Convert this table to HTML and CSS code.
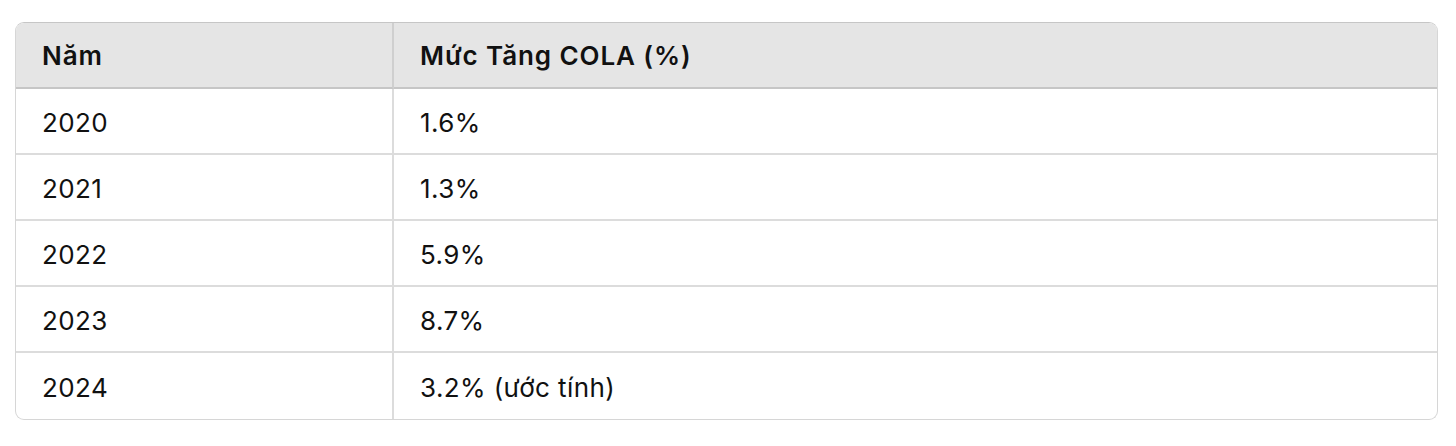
FILE: index.html
```html
<!DOCTYPE html>
<html>
<head>
<meta charset="utf-8">
<link rel="stylesheet" href="styles.css">
</head>
<body>
<div class="wrap">
<table class="tbl">
<thead>
<tr><th class="c1">Năm</th><th>Mức Tăng COLA (%)</th></tr>
</thead>
<tbody>
<tr><td class="c1">2020</td><td>1.6%</td></tr>
<tr><td class="c1">2021</td><td>1.3%</td></tr>
<tr><td class="c1">2022</td><td>5.9%</td></tr>
<tr><td class="c1">2023</td><td>8.7%</td></tr>
<tr><td class="c1">2024</td><td>3.2% (ước tính)</td></tr>
</tbody>
</table>
</div>
</body>
</html>
```
FILE: styles.css
```css
html, body { margin: 0; padding: 0; background: #fff; }
body {
  font-family: Inter, "Noto Sans", sans-serif;
  color: #111;
}
.wrap { padding: 22px 18px 0 15px; }
.tbl {
  width: 100%;
  border-collapse: separate;
  border-spacing: 0;
  border: 1px solid #d6d6d6;
  border-top-color: #c6c6c6;
  border-radius: 9px;
  overflow: hidden;
  font-size: 26px;
  letter-spacing: 0.4px;
}
.tbl thead tr { background: #e5e5e5; }
.tbl th {
  text-align: left;
  font-weight: 600;
  letter-spacing: 0.9px;
  height: 66px;
  padding: 0 26px;
  border-bottom: 2px solid #c6c6c6;
  box-sizing: border-box;
}
.tbl td {
  height: 66px;
  padding: 2px 26px 0;
  border-bottom: 2px solid #dcdcdc;
  box-sizing: border-box;
}
.tbl tbody tr:last-child td { border-bottom: none; }
.tbl .c1 { width: 378px; border-right: 2px solid #dcdcdc; }
.tbl th.c1 { border-right-color: #cfcfcf; }
```
